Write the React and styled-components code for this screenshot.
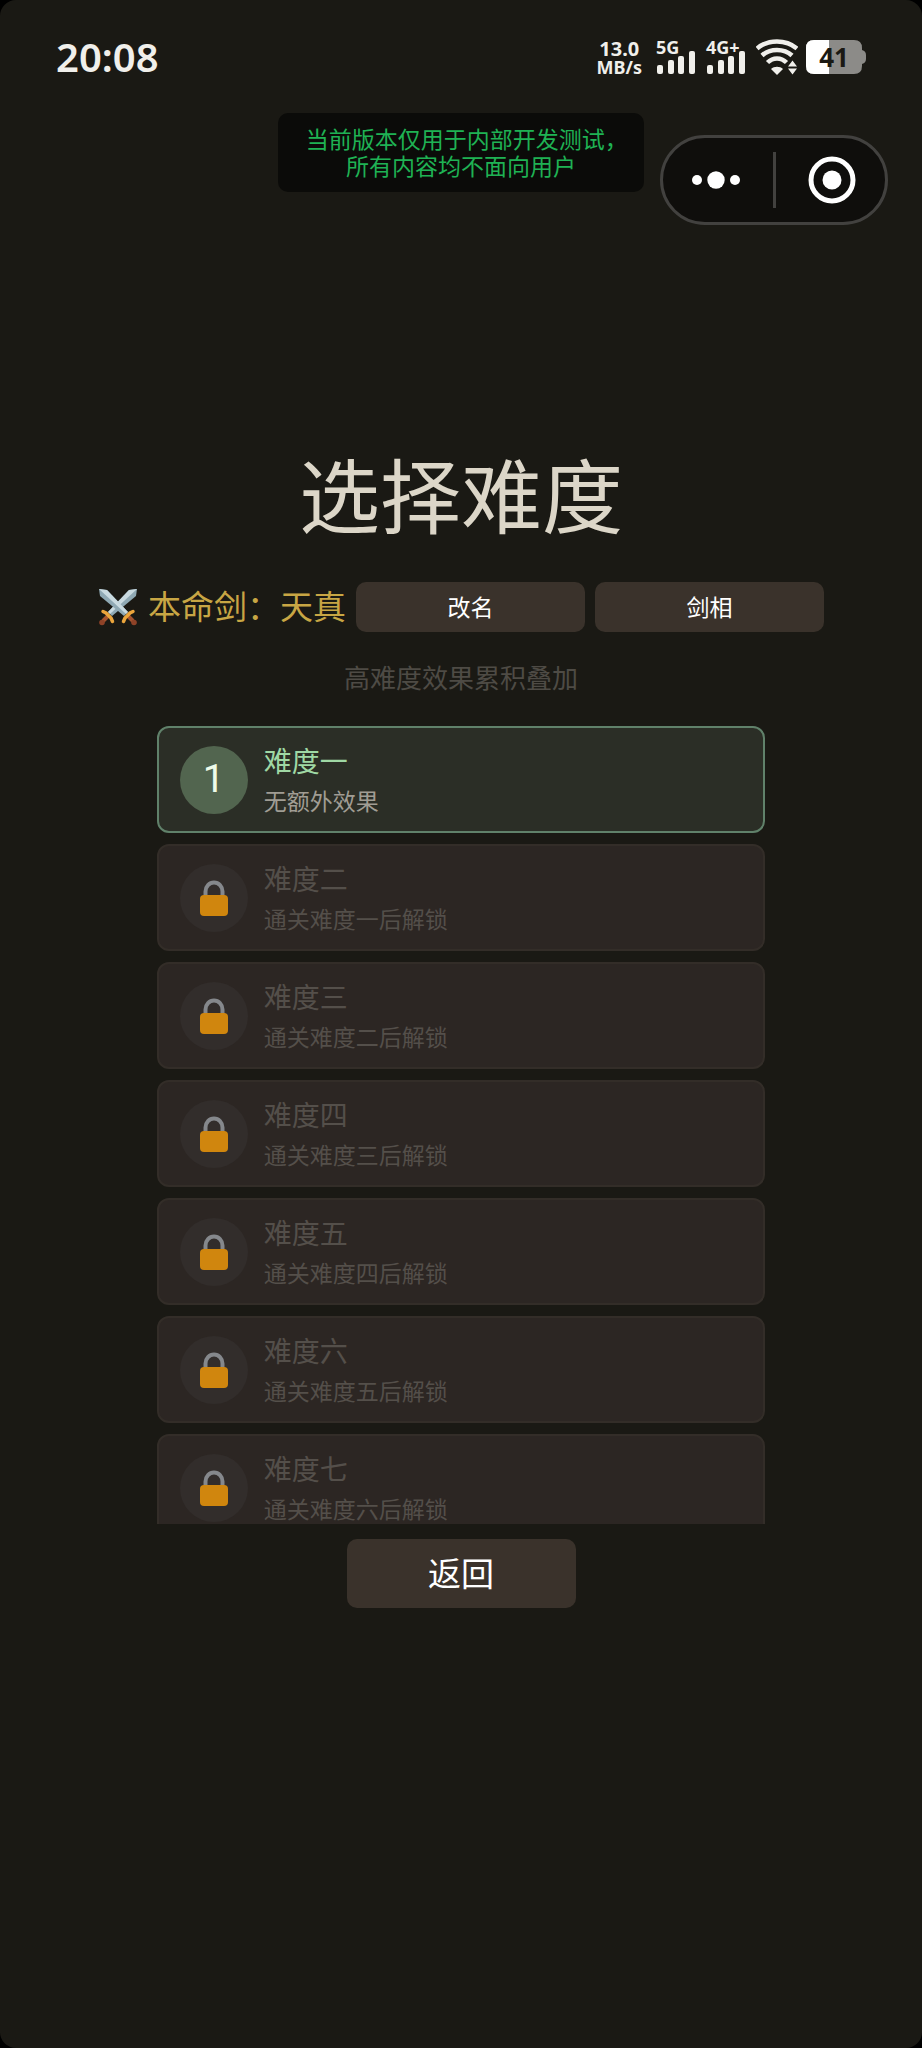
import React, { useState } from 'react';
import styled, { createGlobalStyle } from 'styled-components';

const GlobalStyle = createGlobalStyle`
  *, *::before, *::after {
    box-sizing: border-box;
  }

  body {
    margin: 0;
    background: #000;
    font-family: 'Noto Sans', 'Noto Sans CJK SC', sans-serif;
  }

  h1, h2, p, ul {
    margin: 0;
    padding: 0;
    font-weight: 400;
  }

  button {
    border: none;
    padding: 0;
    font-family: inherit;
    cursor: pointer;
  }
`;

const Screen = styled.div`
  min-height: 100vh;
  display: flex;
  flex-direction: column;
  background: #1a1914;
  border-radius: 16px;
  overflow: hidden;
`;

const StatusBar = styled.header`
  height: 113px;
  display: flex;
  align-items: flex-start;
  justify-content: space-between;
  padding: 36px 56px 0 56px;
  color: #f0efeb;
`;

const Clock = styled.time`
  font-size: 40px;
  line-height: 42px;
  font-weight: 600;
`;

const StatusIcons = styled.div`
  display: flex;
  align-items: flex-start;
  gap: 8px;
  padding-top: 3px;
`;

const NetSpeed = styled.div`
  margin-right: 6px;
  text-align: center;
  font-size: 20px;
  line-height: 19px;
  font-weight: 700;

  small {
    display: block;
    font-size: 18px;
  }
`;

const Signal = styled.div`
  position: relative;
  width: 42px;
  height: 36px;

  span {
    position: absolute;
    top: 0;
    left: 0;
    font-size: 18px;
    line-height: 16px;
    font-weight: 700;
  }

  svg {
    display: block;
  }
`;

const Battery = styled.div`
  position: relative;
  width: 60px;
  height: 36px;

  svg {
    display: block;
  }

  span {
    position: absolute;
    inset: 0 4px 0 0;
    text-align: center;
    font-size: 26px;
    line-height: 36px;
    font-weight: 700;
    color: #1a1914;
  }
`;

const TopRow = styled.div`
  display: grid;
  grid-template-columns: 1fr auto 1fr;
  align-items: start;
  padding-right: 34px;
  padding-left: 34px;
`;

const Notice = styled.p`
  grid-column: 2;
  width: 366px;
  padding: 13px 0 12px;
  border-radius: 10px;
  background: #0b0b09;
  color: #1fb254;
  font-size: 23px;
  line-height: 27px;
  text-align: center;
  font-feature-settings: 'halt';
`;

const Capsule = styled.div`
  justify-self: end;
  display: flex;
  align-items: center;
  width: 228px;
  height: 90px;
  margin-top: 22px;
  border: 3px solid #42413f;
  border-radius: 45px;
  background: #0f0e0c;
`;

const CapsuleButton = styled.button`
  flex: 1;
  height: 84px;
  display: flex;
  align-items: center;
  justify-content: center;
  background: transparent;

  &:first-child {
    padding-right: 3px;
  }

  &:last-child {
    padding-left: 3px;
  }
`;

const CapsuleDivider = styled.span`
  width: 3px;
  height: 56px;
  background: #42413f;
`;

const Main = styled.main`
  display: flex;
  flex-direction: column;
  align-items: center;
  padding-top: 219px;
`;

const Title = styled.h1`
  color: #dcd6c8;
  font-size: 81px;
  line-height: 104px;
`;

const SwordRow = styled.div`
  display: flex;
  align-items: center;
  gap: 10px;
  margin-top: 34px;
`;

const SwordName = styled.p`
  display: flex;
  align-items: center;
  gap: 10px;
  color: #c8a644;
  font-size: 33px;
  line-height: 50px;
`;

const Button = styled.button`
  width: 229px;
  height: ${props => (props.$large ? '69px' : '50px')};
  border-radius: 10px;
  background: #3a322b;
  color: #fff;
  font-size: ${props => (props.$large ? '33px' : '23px')};
  line-height: 1;
`;

const Hint = styled.p`
  margin-top: 28px;
  color: #4e4b45;
  font-size: 26px;
  line-height: 36px;
`;

const LevelList = styled.ul`
  width: 66%;
  height: 798px;
  margin-top: 30px;
  display: flex;
  flex-direction: column;
  gap: 11px;
  list-style: none;
  overflow-y: auto;
  scrollbar-width: none;
`;

const LevelCard = styled.button`
  width: 100%;
  height: 107px;
  display: flex;
  align-items: center;
  gap: 16px;
  padding: 0 21px;
  text-align: left;
  border: ${props => (props.$selected ? '2px solid #60816a' : '2px solid #332d28')};
  border-radius: 12px;
  background: ${props => (props.$selected ? '#2b2e26' : '#2c2623')};

  &:disabled {
    cursor: default;
  }
`;

const Badge = styled.span`
  flex: none;
  display: flex;
  align-items: center;
  justify-content: center;
  width: 68px;
  height: 68px;
  border-radius: 50%;
  background: ${props => (props.$locked ? '#322d2b' : '#52654f')};
  color: #eefbe9;
  font-family: Roboto, sans-serif;
  font-size: 39px;
  line-height: 1;
`;

const LevelText = styled.span`
  display: flex;
  flex-direction: column;
  gap: 6px;
`;

const LevelName = styled.span`
  color: ${props => (props.$locked ? '#544f4a' : '#9fd8a4')};
  font-size: 28px;
  line-height: 36px;
`;

const LevelDesc = styled.span`
  color: ${props => (props.$locked ? '#544f4a' : '#a09d94')};
  font-size: 23px;
  line-height: 32px;
`;

const Footer = styled.div`
  margin-top: 15px;
`;

const levels = [
  { name: '难度一', desc: '无额外效果' },
  { name: '难度二', desc: '通关难度一后解锁', locked: true },
  { name: '难度三', desc: '通关难度二后解锁', locked: true },
  { name: '难度四', desc: '通关难度三后解锁', locked: true },
  { name: '难度五', desc: '通关难度四后解锁', locked: true },
  { name: '难度六', desc: '通关难度五后解锁', locked: true },
  { name: '难度七', desc: '通关难度六后解锁', locked: true },
];

const SignalBars = ({ label }) => (
  <Signal>
    <span>{label}</span>
    <svg width="42" height="36" viewBox="0 0 42 36" fill="currentColor">
      <rect x="1" y="26" width="6" height="9" rx="2" />
      <rect x="12" y="21" width="6" height="14" rx="2" />
      <rect x="22" y="17" width="6" height="18" rx="2" />
      <rect x="33" y="12" width="6" height="23" rx="2" />
    </svg>
  </Signal>
);

const WifiIcon = () => (
  <svg width="42" height="36" viewBox="0 0 42 36" fill="none" stroke="currentColor" strokeWidth="4.5">
    <path d="M1 9.500C12 0 30 0 41 9.500" />
    <path d="M6 16.500C14 9 28 9 36 16.500" />
    <path d="M11.500 23.500C17 18 25 18 30.500 23.500" />
    <path d="M15 30C18 27 24 27 27 30L21 36Z" fill="currentColor" stroke="none" />
    <path d="M32 27.500L36.500 21.500L41 27.500ZM32 29.500L36.500 35.500L41 29.500Z" fill="currentColor" stroke="none" />
  </svg>
);

const BatteryIcon = () => (
  <svg width="60" height="36" viewBox="0 0 60 36">
    <path d="M8 1H48Q56 1 56 9V11Q60 12 60 16V20Q60 24 56 25V27Q56 35 48 35H8Q0 35 0 27V9Q0 1 8 1Z" fill="#8c8b88" />
    <path d="M8 1H23V35H8Q0 35 0 27V9Q0 1 8 1Z" fill="#fff" />
  </svg>
);

const LockIcon = () => (
  <svg width="28" height="36" viewBox="0 0 28 36">
    <path d="M5.500 17V11.500A8.500 9 0 0 1 22.500 11.500V17" fill="none" stroke="#85888c" strokeWidth="4" />
    <rect x="0" y="15" width="28" height="21" rx="4" fill="#d0860e" />
  </svg>
);

const SwordsIcon = () => (
  <svg width="40" height="40" viewBox="0 0 40 40">
    <g id="sword">
      <path d="M39 2L31 3L10 25L14 29L38 9Z" fill="#8fa9b4" />
      <path d="M39 2L31 3L10 25L12 27Z" fill="#c9dae0" />
      <path d="M10 29L5 34" stroke="#a3532f" strokeWidth="4" />
      <circle cx="4" cy="35.500" r="2.800" fill="#8e4227" />
      <path d="M5 24.500L8 26L13 31L14.500 34.500" fill="none" stroke="#eba53c" strokeWidth="3.500" strokeLinecap="round" />
    </g>
    <use href="#sword" transform="matrix(-1 0 0 1 40 0)" />
  </svg>
);

const App = () => {
  const [selected, setSelected] = useState(0);

  return (
    <>
      <GlobalStyle />
      <Screen>
        <StatusBar>
          <Clock>20:08</Clock>
          <StatusIcons>
            <NetSpeed>13.0<small>MB/s</small></NetSpeed>
            <SignalBars label="5G" />
            <SignalBars label="4G+" />
            <WifiIcon />
            <Battery>
              <BatteryIcon />
              <span>41</span>
            </Battery>
          </StatusIcons>
        </StatusBar>

        <TopRow>
          <Notice>当前版本仅用于内部开发测试，<br />所有内容均不面向用户</Notice>
          <Capsule>
            <CapsuleButton aria-label="更多">
              <svg width="48" height="18" viewBox="0 0 48 18" fill="#fff">
                <circle cx="5" cy="9" r="5" />
                <circle cx="24" cy="9" r="8.700" />
                <circle cx="43" cy="9" r="5" />
              </svg>
            </CapsuleButton>
            <CapsuleDivider />
            <CapsuleButton aria-label="关闭">
              <svg width="48" height="48" viewBox="0 0 48 48">
                <circle cx="24" cy="24" r="21" fill="none" stroke="#fff" strokeWidth="5" />
                <circle cx="24" cy="24" r="9.500" fill="#fff" />
              </svg>
            </CapsuleButton>
          </Capsule>
        </TopRow>

        <Main>
          <Title>选择难度</Title>
          <SwordRow>
            <SwordName><SwordsIcon />本命剑：天真</SwordName>
            <Button>改名</Button>
            <Button>剑相</Button>
          </SwordRow>
          <Hint>高难度效果累积叠加</Hint>
          <LevelList>
            {levels.map((level, index) => (
              <li key={level.name}>
                <LevelCard
                  $selected={selected === index}
                  disabled={level.locked}
                  onClick={() => setSelected(index)}
                >
                  <Badge $locked={level.locked}>
                    {level.locked ? <LockIcon /> : index + 1}
                  </Badge>
                  <LevelText>
                    <LevelName $locked={level.locked}>{level.name}</LevelName>
                    <LevelDesc $locked={level.locked}>{level.desc}</LevelDesc>
                  </LevelText>
                </LevelCard>
              </li>
            ))}
          </LevelList>
          <Footer>
            <Button $large>返回</Button>
          </Footer>
        </Main>
      </Screen>
    </>
  );
};

export default App;
